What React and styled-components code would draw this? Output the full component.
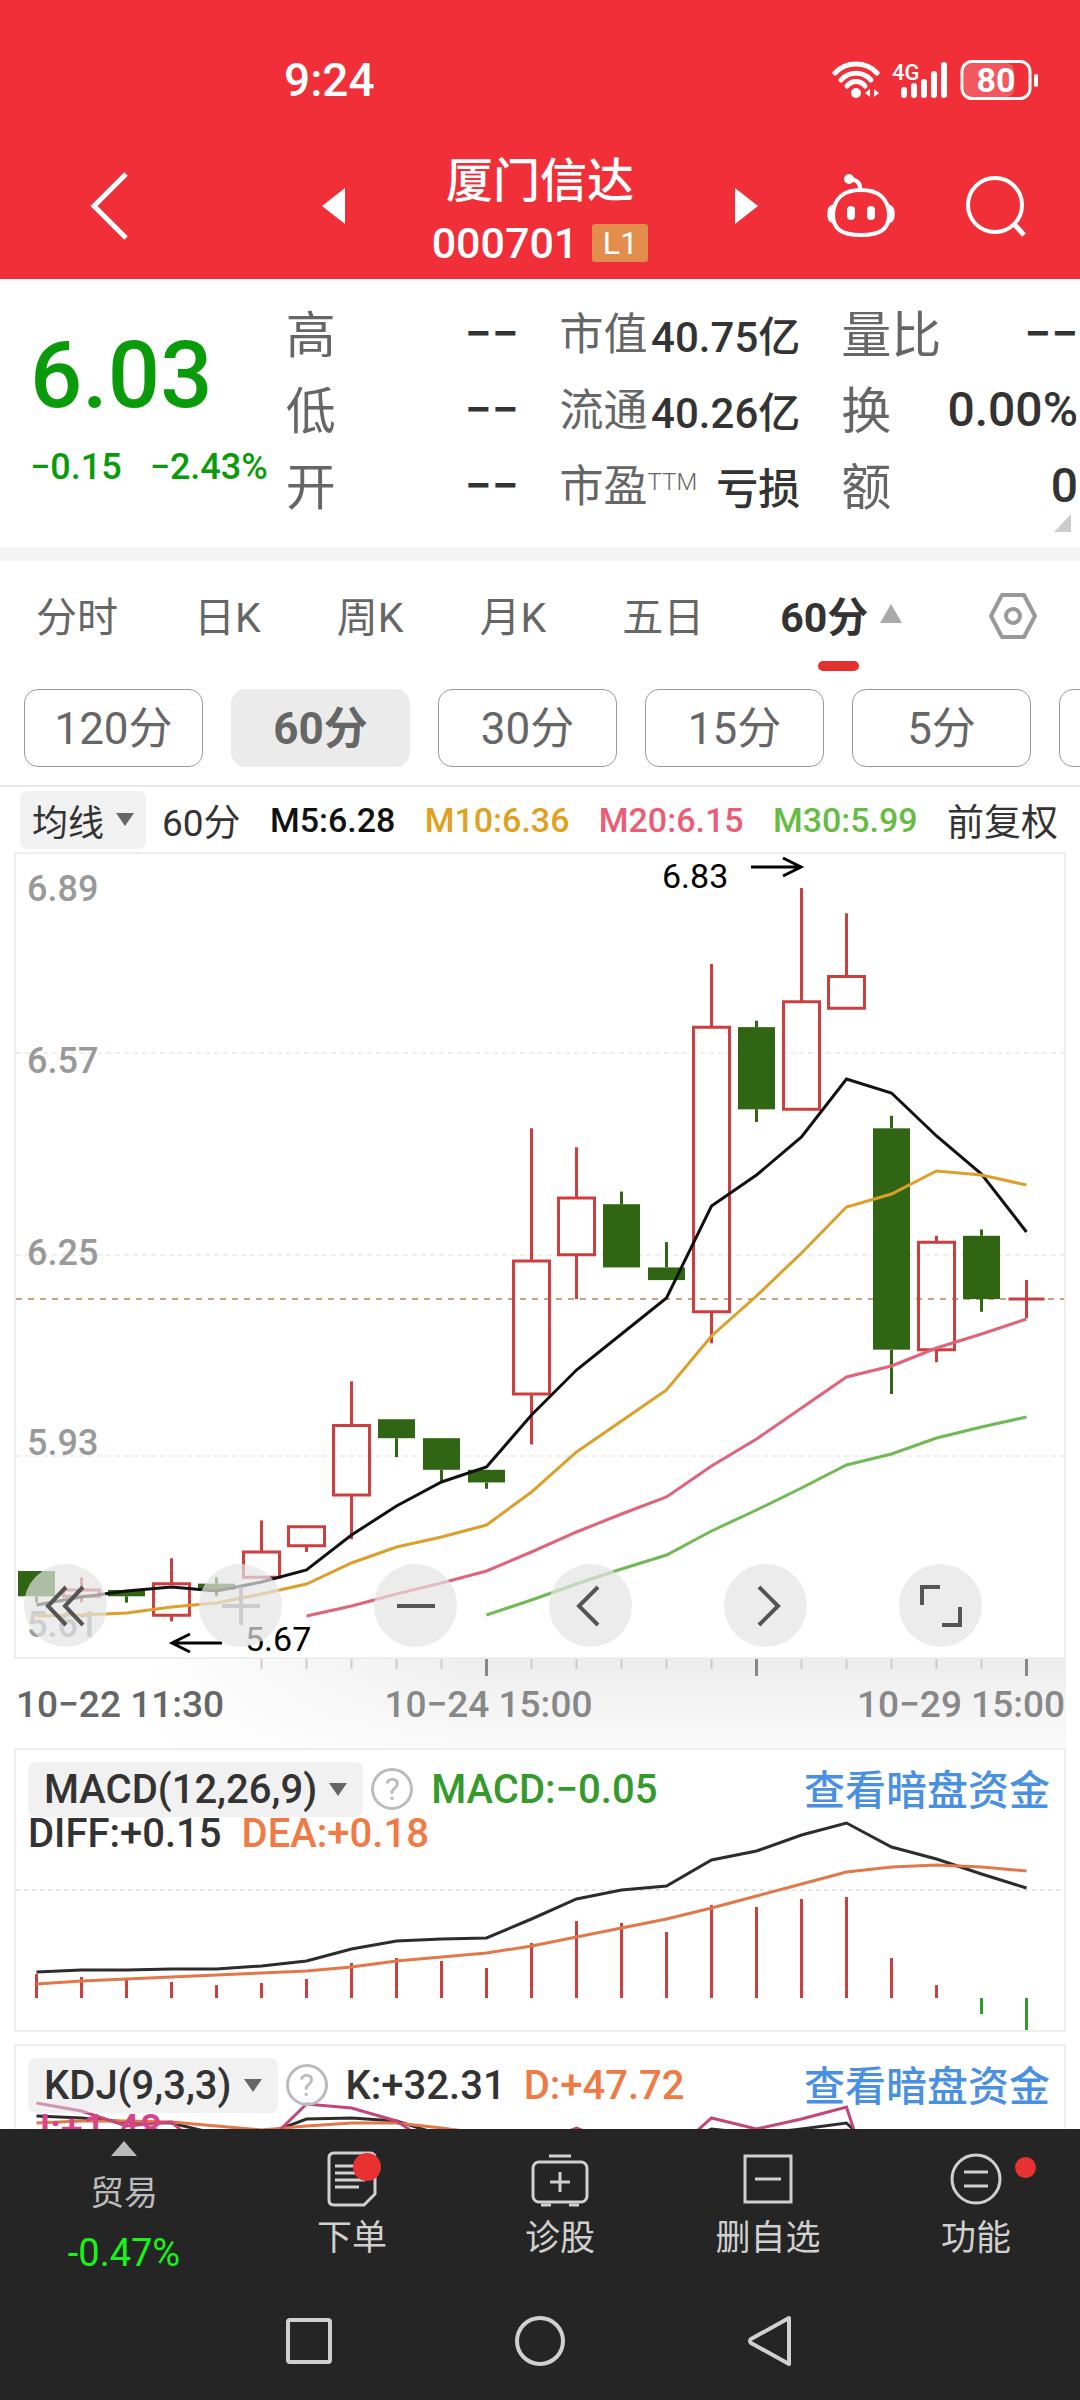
import React, { useState } from "react";
import styled, { createGlobalStyle } from "styled-components";

const GlobalStyle = createGlobalStyle`
  * {
    box-sizing: border-box;
  }

  body {
    margin: 0;
    background-color: white;
    font-family: Roboto, "Noto Sans CJK SC", sans-serif;
    color: #333;
  }

  button {
    border: none;
    padding: 0;
    background: none;
    color: inherit;
    font-family: inherit;
    cursor: pointer;
  }

  a {
    text-decoration: none;
  }

  svg {
    display: block;
  }
`;

const Screen = styled.div`
  height: 100vh;
  display: flex;
  flex-direction: column;
  overflow: hidden;
`;

/* ---------- red header ---------- */

const Header = styled.header`
  flex-shrink: 0;
  height: 279px;
  background-color: #f12f38;
  color: white;
`;

const StatusBar = styled.div`
  height: 144px;
  padding: 16px 40px 0 284px;
  display: flex;
  align-items: center;
  justify-content: space-between;

  .time {
    font-size: 46px;
    font-weight: 500;
  }

  .icons {
    display: flex;
    align-items: center;
    gap: 12px;
  }
`;

const TitleBar = styled.div`
  display: grid;
  grid-template-columns: 1fr 436px 1fr;
  grid-template-rows: 124px;
  align-items: center;

  .back {
    justify-self: start;
    margin-left: 90px;
  }

  .actions {
    display: flex;
    justify-content: flex-end;
    align-items: center;
    gap: 68px;
    padding-right: 54px;
  }
`;

const StockSwitch = styled.div`
  display: flex;
  align-items: center;
  justify-content: space-between;

  .stock {
    padding-top: 12px;
    text-align: center;
  }

  h1 {
    margin: 0;
    font-size: 47px;
    line-height: 62px;
    font-weight: 500;
  }

  .code {
    display: flex;
    align-items: center;
    justify-content: center;
    gap: 14px;
    font-size: 43px;
    line-height: 62px;
    font-weight: 500;
  }

  .level {
    width: 56px;
    height: 38px;
    background-color: #e28d4b;
    border-radius: 3px;
    font-size: 32px;
    line-height: 38px;
    font-weight: 400;
  }
`;

/* ---------- quote ---------- */

const Quote = styled.section`
  flex-shrink: 0;
  position: relative;
  display: grid;
  grid-template-columns: minmax(0, 216fr) minmax(0, 234fr) minmax(0, 242fr) minmax(0, 238fr);
  gap: 41px;
  height: 282px;
  padding: 14px 2px 0 30px;
  border-bottom: 14px solid #f4f4f4;
`;

const Price = styled.div`
  color: #099b09;
  font-weight: 500;
  white-space: nowrap;

  .last {
    margin-top: 33px;
    font-size: 92px;
    line-height: 100px;
  }

  .change {
    display: flex;
    gap: 28px;
    margin-top: 21px;
    font-size: 36px;
    line-height: 40px;
  }
`;

const Metric = styled.div`
  display: flex;
  justify-content: space-between;
  align-items: center;
  height: 76px;
  white-space: nowrap;
  font-size: ${(p) => (p.$small ? "42px" : "48px")};

  .label {
    color: #666;
    font-size: ${(p) => (p.$small ? "44px" : "50px")};
  }

  sup {
    font-size: 24px;
    font-weight: 300;
    line-height: 24px;
    vertical-align: 12px;
  }

  .value {
    padding-top: 4px;
    font-weight: 500;
  }
`;

const Corner = styled.span`
  position: absolute;
  right: 9px;
  bottom: 15px;
  border-left: 17px solid transparent;
  border-bottom: 18px solid #ccc;
`;

/* ---------- period tabs ---------- */

const Tabs = styled.nav`
  flex-shrink: 0;
  display: flex;
  align-items: center;
  gap: 76px;
  height: 118px;
  padding: 0 42px 8px 36px;

  .settings {
    margin-left: auto;
  }
`;

const Tab = styled.button`
  position: relative;
  display: flex;
  align-items: center;
  gap: 12px;
  height: 60px;
  padding-bottom: 5px;
  font-size: 41px;
  color: ${(p) => (p.$active ? "#333" : "#666")};
  font-weight: ${(p) => (p.$active ? 700 : 400)};

  &::after {
    content: "";
    display: ${(p) => (p.$active ? "block" : "none")};
    position: absolute;
    left: 38px;
    top: 75px;
    width: 41px;
    height: 10px;
    border-radius: 5px;
    background-color: #e53030;
  }
`;

const Pills = styled.div`
  flex-shrink: 0;
  display: flex;
  gap: 28px;
  padding: 10px 0 18px 24px;
  overflow: hidden;
  border-bottom: 2px solid #e8e8e8;
`;

const Pill = styled.button`
  flex: 0 0 179px;
  height: 78px;
  padding-bottom: 6px;
  border: 1px solid ${(p) => (p.$active ? "#ebebeb" : "#999")};
  border-radius: 14px;
  background-color: ${(p) => (p.$active ? "#ebebeb" : "white")};
  color: #666;
  font-size: 44px;
  font-weight: ${(p) => (p.$active ? 700 : 400)};
`;

/* ---------- charts ---------- */

const Legend = styled.div`
  flex-shrink: 0;
  display: flex;
  align-items: center;
  height: 65px;
  padding: 0 22px 0 20px;
  gap: 16px;
  white-space: nowrap;

  .values {
    flex: 1;
    display: flex;
    align-items: center;
    justify-content: space-between;
    font-size: 34px;
  }
`;

const Picker = styled.button`
  display: flex;
  align-items: center;
  gap: 12px;
  height: ${(p) => (p.$small ? "58px" : "55px")};
  padding: ${(p) => (p.$small ? "0 12px" : "0 16px")};
  border-radius: 8px;
  background-color: rgba(228, 228, 228, 0.5);
  color: #333;
  font-size: ${(p) => (p.$small ? "36px" : "40px")};
  font-weight: ${(p) => (p.$small ? 400 : 500)};
`;

const Value = styled.span`
  color: ${(p) => p.$color};
  font-size: ${(p) => (p.$plain ? "37px" : "inherit")};
  font-weight: ${(p) => (p.$plain ? 400 : 500)};
`;

const Main = styled.main`
  flex: 1;
  min-height: 0;
  overflow: hidden;
  padding: 0 14px;

  section svg.plot {
    width: 100%;
    height: auto;
  }
`;

const ChartPanel = styled.section`
  position: relative;
  border: 2px solid #eee;
`;

const Controls = styled.div`
  position: absolute;
  left: 8px;
  bottom: 10px;
  display: flex;
  gap: 92px;

  button {
    width: 83px;
    height: 83px;
    border-radius: 50%;
    background-color: rgba(228, 228, 228, 0.7);
    display: flex;
    align-items: center;
    justify-content: center;
  }
`;

const Axis = styled.div`
  height: 89px;
  background: linear-gradient(90deg, white 12%, transparent 45%),
    linear-gradient(180deg, #ededed, #fafafa);

  .dates {
    display: grid;
    grid-template-columns: 368fr 472fr auto;
    padding: 4px 1px 0 2px;
    font-size: 37px;
    line-height: 44px;
    font-weight: 500;
    color: #888;
  }

  .dates span:first-child {
    color: #666;
  }
`;

const IndicatorPanel = styled.section`
  display: grid;
  margin-bottom: 12px;
  border: 2px solid #eee;

  > * {
    grid-area: 1 / 1;
    min-width: 0;
  }
`;

const IndicatorHead = styled.div`
  position: relative;
  padding: 12px 14px 0 12px;
  font-size: 40px;
  white-space: nowrap;

  .row {
    display: flex;
    align-items: center;
    height: 54px;
    gap: 18px;
  }

  .picker {
    display: flex;
    align-items: center;
    gap: 8px;
  }

  .second {
    display: flex;
    gap: 20px;
    line-height: 36px;
  }

  a {
    margin-left: auto;
    padding-bottom: 5px;
    color: #4a90e2;
    font-size: 41px;
    font-weight: 500;
  }
`;

const HelpButton = styled.button`
  width: 42px;
  height: 42px;
  border: 3px solid #bbb;
  border-radius: 50%;
  color: #bbb;
  font-size: 32px;
  line-height: 36px;
`;

/* ---------- bottom ---------- */

const BottomNav = styled.nav`
  flex-shrink: 0;
  display: grid;
  grid-template-columns: 248fr repeat(4, 208fr);
  height: 161px;
  background-color: #252525;
  color: #d0d0d0;
`;

const NavItem = styled.button`
  display: flex;
  flex-direction: column;
  align-items: center;
  padding-top: 22px;
  font-size: 35px;
  line-height: 46px;

  .icon {
    position: relative;
    height: 65px;
  }
`;

const IndexItem = styled(NavItem)`
  padding-top: 12px;
  color: #bbb;
  font-size: 34px;

  .name {
    margin-top: 14px;
  }

  .percent {
    margin-top: 14px;
    color: #17f517;
    font-size: 38px;
  }
`;

const Dot = styled.span`
  position: absolute;
  top: ${(p) => (p.$large ? "2px" : "6px")};
  right: ${(p) => (p.$large ? "-4px" : "-34px")};
  width: ${(p) => (p.$large ? "28px" : "21px")};
  height: ${(p) => (p.$large ? "28px" : "21px")};
  border-radius: 50%;
  background-color: #e83232;
`;

const SystemBar = styled.div`
  flex-shrink: 0;
  display: flex;
  justify-content: center;
  gap: 181px;
  height: 110px;
  padding: 24px 2px 0 0;
  background-color: #252525;

  button {
    height: 52px;
  }
`;

/* ---------- data ---------- */

// open, close, high, low
const candles = [
  [5.75, 5.71, 5.75, 5.7],
  [5.71, 5.72, 5.74, 5.7],
  [5.72, 5.71, 5.72, 5.7],
  [5.68, 5.73, 5.77, 5.67],
  [5.73, 5.72, 5.74, 5.71],
  [5.74, 5.78, 5.83, 5.74],
  [5.79, 5.82, 5.82, 5.78],
  [5.87, 5.98, 6.05, 5.8],
  [5.99, 5.96, 5.99, 5.93],
  [5.96, 5.91, 5.96, 5.89],
  [5.91, 5.89, 5.91, 5.88],
  [6.03, 6.24, 6.45, 5.95],
  [6.25, 6.34, 6.42, 6.18],
  [6.33, 6.23, 6.35, 6.23],
  [6.23, 6.21, 6.27, 6.21],
  [6.16, 6.61, 6.71, 6.11],
  [6.61, 6.48, 6.62, 6.46],
  [6.48, 6.65, 6.83, 6.48],
  [6.64, 6.69, 6.79, 6.64],
  [6.45, 6.1, 6.47, 6.03],
  [6.1, 6.27, 6.28, 6.08],
  [6.28, 6.18, 6.29, 6.16],
  [6.18, 6.18, 6.21, 6.15],
];

const averages = [
  { color: "#111", start: 0, ys: [753, 745, 739, 735, 739, 730, 718, 683, 654, 630, 615, 563, 518, 482, 446, 354, 323, 285, 227, 241, 284, 322, 380] },
  { color: "#dd9f2a", start: 0, ys: [764, 763, 761, 755, 751, 742, 732, 711, 695, 685, 673, 640, 600, 569, 538, 484, 444, 401, 355, 342, 319, 323, 333] },
  { color: "#e0637a", start: 6, ys: [764, 754, 742, 731, 719, 700, 680, 662, 645, 614, 587, 556, 525, 514, 496, 482, 467] },
  { color: "#6fba55", start: 10, ys: [763, 748, 732, 717, 703, 679, 658, 636, 613, 602, 586, 575, 565] },
];

const macdBars = [24, 21, 18, 16, 13, 15, 19, 35, 40, 37, 30, 55, 77, 75, 66, 93, 91, 99, 101, 40, 13, -16, -33];
const diffLine = [224, 222, 222, 221, 221, 218, 213, 201, 193, 191, 190, 171, 151, 142, 138, 112, 103, 87, 75, 99, 111, 126, 140];
const deaLine = [236, 233, 231, 229, 227, 225, 223, 219, 213, 209, 205, 198, 189, 180, 171, 160, 148, 136, 124, 119, 117, 119, 123];

const kLine = [72, 74, 78, 79, 90, 92, 75, 74, 77, 91, 100, 100, 95, 105, 105, 85, 90, 85, 79, 122, 130];
const dLine = [79, 77, 77, 78, 82, 86, 82, 79, 79, 84, 90, 97, 97, 97, 97, 95, 93, 90, 86, 100, 110];
const jLine = [59, 67, 82, 78, 117, 104, 60, 64, 77, 107, 107, 102, 84, 102, 114, 74, 85, 75, 63, 202, 202];

const scaleLabels = [
  ["6.89", 49],
  ["6.57", 221],
  ["6.25", 413],
  ["5.93", 603],
  ["5.61", 785],
];

const metrics = [
  [["高", "--"], ["低", "--"], ["开", "--"]],
  [["市值", "40.75亿"], ["流通", "40.26亿"], ["市盈", "亏损", "TTM"]],
  [["量比", "--"], ["换", "0.00%"], ["额", "0"]],
];

const tabs = ["分时", "日K", "周K", "月K", "五日", "60分"];
const periods = ["120分", "60分", "30分", "15分", "5分", ""];

const xAt = (i) => 22.5 + i * 45;
const yAt = (price) => 36 + (6.83 - price) * 632.4;
const toPoints = (ys, start = 0) => ys.map((y, i) => `${xAt(i + start)},${y}`).join(" ");

/* ---------- drawings ---------- */

const Wifi = () => (
  <svg width="48" height="40" viewBox="0 0 48 40" fill="none" stroke="white" strokeWidth="5" strokeLinecap="round">
    <path d="M3 13 C14 1 34 1 45 13" />
    <path d="M9 20 C17 11 31 11 39 20" />
    <path d="M15 26 C20 20 28 20 33 26" />
    <circle cx="24" cy="33" r="5" fill="white" stroke="none" />
    <path d="M38 29 v8 l-5 -4 z M42 29 v8 l5 -4 z" fill="white" stroke="none" />
  </svg>
);

const Signal = () => (
  <svg width="56" height="40" viewBox="0 0 56 40">
    <text x="0" y="20" fontSize="22" fontWeight="500" fill="white">4G</text>
    <path d="M12 30 V35 M22 26 V35 M32 22 V35 M42 14 V35 M52 5 V35" stroke="white" strokeWidth="6" strokeLinecap="round" />
  </svg>
);

const Battery = () => (
  <svg width="80" height="40" viewBox="0 0 80 40">
    <rect x="4" y="3" width="50" height="34" rx="8" fill="white" opacity="0.2" />
    <rect x="2" y="1.5" width="68" height="37" rx="10" fill="none" stroke="white" strokeWidth="3" />
    <path d="M76 16 V25" stroke="white" strokeWidth="4" strokeLinecap="round" />
    <text x="36" y="32" fontSize="34" fontWeight="700" fill="white" textAnchor="middle">80</text>
  </svg>
);

const Robot = () => (
  <svg width="70" height="64" viewBox="0 0 70 64" fill="none" stroke="white" strokeWidth="4">
    <path d="M35 16 C52 16 62 24 63 40 C63 55 55 61 35 61 C15 61 7 55 7 40 C8 24 18 16 35 16 Z" />
    <path d="M34 16 C35 9 31 6 24 5" />
    <circle cx="23" cy="5" r="5" fill="white" stroke="none" />
    <path d="M6 32 C1 34 1 46 6 48 Z M64 32 C69 34 69 46 64 48 Z" fill="white" strokeWidth="2" />
    <path d="M25 36 V42 M45 36 V42" strokeWidth="8" strokeLinecap="round" />
  </svg>
);

const Caret = ({ up, width = 18, height = 13, color = "#666" }) => (
  <svg width={width} height={height} viewBox="0 0 18 13" preserveAspectRatio="none">
    <path d={up ? "M0 13 L9 0 L18 13 Z" : "M0 0 L18 0 L9 13 Z"} fill={color} />
  </svg>
);

const Candle = ({ index, data }) => {
  const [open, close, high, low] = data;
  const x = xAt(index);
  const top = yAt(Math.max(open, close));
  const bottom = yAt(Math.min(open, close));
  const rising = close >= open;
  const color = rising ? "#cd3f3f" : "#306613";
  return (
    <g stroke={color} strokeWidth="3" fill="none">
      <path d={`M${x} ${yAt(high)} V${top} M${x} ${bottom} V${yAt(low)}`} />
      {rising ? (
        <path d={`M${x - 18} ${top} H${x + 18} V${bottom} H${x - 18} Z`} />
      ) : (
        <rect x={x - 18.5} y={top} width="37" height={bottom - top} fill={color} stroke="none" />
      )}
    </g>
  );
};

const PriceChart = () => (
  <svg className="plot" viewBox="2 2 1048 803">
    <g stroke="#dedede" strokeWidth="1" strokeDasharray="5 4">
      <path d="M2 201 H1050 M2 403 H1050 M2 604 H1050" />
    </g>
    <path d="M2 447 H1050" stroke="#c4a57a" strokeWidth="2" strokeDasharray="6 6" />
    {scaleLabels.map(([text, y]) => (
      <text key={text} x="13" y={y} fontSize="36" fontWeight="500" fill="#999">{text}</text>
    ))}
    {candles.map((c, i) => (
      <Candle key={i} index={i} data={c} />
    ))}
    {averages.map((line) => (
      <polyline key={line.color} points={toPoints(line.ys, line.start)} fill="none" stroke={line.color} strokeWidth="3" />
    ))}
    <g fill="none" stroke="black" strokeWidth="3">
      <path d="M737 15 H787 M769 6 L787 15 L769 24" />
      <path d="M208 791 H158 M176 782 L158 791 L176 800" />
    </g>
    <text x="648" y="36" fontSize="34" fill="black">6.83</text>
    <text x="231" y="799" fontSize="34" fill="black">5.67</text>
  </svg>
);

const Ticks = () => (
  <svg viewBox="0 0 1052 20" width="100%">
    {candles.map((_, i) => {
      const major = i === 10 || i === 16 || i === 22;
      return i < 5 ? null : (
        <path key={i} d={`M${xAt(i)} 0 V${major ? 17 : 10}`} stroke={major ? "#888" : "#ccc"} strokeWidth={major ? 3 : 2} />
      );
    })}
  </svg>
);

const MacdChart = () => (
  <svg className="plot" viewBox="2 2 1048 280">
    <path d="M2 142 H1050" stroke="#e4e4e4" strokeWidth="2" strokeDasharray="4 4" />
    {macdBars.map((h, i) => (
      <path key={i} d={`M${xAt(i)} 250 V${250 - h}`} stroke={h > 0 ? "#cd3f3f" : "#349a2b"} strokeWidth="3" />
    ))}
    <polyline points={toPoints(diffLine)} fill="none" stroke="#2c2c2c" strokeWidth="3" />
    <polyline points={toPoints(deaLine)} fill="none" stroke="#e27849" strokeWidth="3" />
  </svg>
);

const KdjChart = () => (
  <svg className="plot" viewBox="2 2 1048 280">
    <polyline points={toPoints(kLine)} fill="none" stroke="#2c2c2c" strokeWidth="3" />
    <polyline points={toPoints(dLine)} fill="none" stroke="#e27849" strokeWidth="3" />
    <polyline points={toPoints(jLine)} fill="none" stroke="#c4447c" strokeWidth="3" />
  </svg>
);

const ControlIcon = ({ d, color = "#555" }) => (
  <svg width="44" height="44" viewBox="0 0 44 44" fill="none" stroke={color} strokeWidth="4">
    <path d={d} />
  </svg>
);

const controls = [
  { label: "最早", d: "M22 3 L4 22 L22 41 M39 3 L21 22 L39 41" },
  { label: "放大", d: "M3 22 H41 M22 3 V41", color: "#ccc" },
  { label: "缩小", d: "M3 22 H41" },
  { label: "左移", d: "M29 3 L10 22 L29 41" },
  { label: "右移", d: "M15 3 L34 22 L15 41" },
  { label: "全屏", d: "M3 21 V3 H21 M41 23 V41 H23" },
];

const Indicator = ({ name, values, extra, children }) => (
  <IndicatorPanel>
    {children}
    <IndicatorHead>
      <div className="row">
        <div className="picker">
          <Picker>
            {name}
            <Caret />
          </Picker>
          <HelpButton aria-label={`${name} 说明`}>?</HelpButton>
        </div>
        {values}
        <a href="#funds">查看暗盘资金</a>
      </div>
      <div className="second">{extra}</div>
    </IndicatorHead>
  </IndicatorPanel>
);

const App = () => {
  const [tab, setTab] = useState("60分");
  const [period, setPeriod] = useState("60分");

  return (
    <>
      <GlobalStyle />
      <Screen>
        <Header>
          <StatusBar>
            <span className="time">9:24</span>
            <div className="icons">
              <Wifi />
              <Signal />
              <Battery />
            </div>
          </StatusBar>
          <TitleBar>
            <button className="back" aria-label="返回">
              <svg width="38" height="68" viewBox="0 0 38 68" fill="none" stroke="white" strokeWidth="5">
                <path d="M36 2 L4 34 L36 66" />
              </svg>
            </button>
            <StockSwitch>
              <button aria-label="上一只">
                <svg width="23" height="36" viewBox="0 0 23 36"><path d="M23 0 V36 L0 18 Z" fill="white" /></svg>
              </button>
              <div className="stock">
                <h1>厦门信达</h1>
                <div className="code">
                  000701
                  <span className="level">L1</span>
                </div>
              </div>
              <button aria-label="下一只">
                <svg width="23" height="36" viewBox="0 0 23 36"><path d="M0 0 V36 L23 18 Z" fill="white" /></svg>
              </button>
            </StockSwitch>
            <div className="actions">
              <button aria-label="智能助手"><Robot /></button>
              <button aria-label="搜索">
                <svg width="62" height="62" viewBox="0 0 62 62" fill="none" stroke="white" strokeWidth="4">
                  <circle cx="31" cy="30" r="27" />
                  <path d="M50 49 L60 60" strokeWidth="5" />
                </svg>
              </button>
            </div>
          </TitleBar>
        </Header>

        <Quote>
          <Price>
            <div className="last">6.03</div>
            <div className="change">
              <span>−0.15</span>
              <span>−2.43%</span>
            </div>
          </Price>
          {metrics.map((column, i) => (
            <div key={i}>
              {column.map(([label, value, note]) => (
                <Metric key={label} $small={i === 1}>
                  <span className="label">
                    {label}
                    {note && <sup>{note}</sup>}
                  </span>
                  <span className="value">{value === "--" ? "−−" : value}</span>
                </Metric>
              ))}
            </div>
          ))}
          <Corner />
        </Quote>

        <Tabs>
          {tabs.map((t) => (
            <Tab key={t} $active={t === tab} onClick={() => setTab(t)}>
              {t}
              {t === "60分" && <Caret up width={22} height={19} color="#aaa" />}
            </Tab>
          ))}
          <button className="settings" aria-label="设置">
            <svg width="50" height="48" viewBox="0 0 50 48" fill="none" stroke="#999" strokeWidth="4" strokeLinejoin="round">
              <path d="M14 3 H36 L47 24 L36 45 H14 L3 24 Z" />
              <circle cx="25" cy="24" r="7" />
            </svg>
          </button>
        </Tabs>

        <Pills>
          {periods.map((p) => (
            <Pill key={p} $active={p === period} aria-label={p || "更多周期"} onClick={() => setPeriod(p)}>
              {p}
            </Pill>
          ))}
        </Pills>

        <Legend>
          <Picker $small>
            均线
            <Caret />
          </Picker>
          <div className="values">
            <Value $color="#333" $plain>60分</Value>
            <Value $color="#111">M5:6.28</Value>
            <Value $color="#e0a020">M10:6.36</Value>
            <Value $color="#ea5d74">M20:6.15</Value>
            <Value $color="#66bb44">M30:5.99</Value>
            <Value $color="#333" $plain>前复权</Value>
          </div>
        </Legend>

        <Main>
          <ChartPanel>
            <PriceChart />
            <Controls>
              {controls.map((c) => (
                <button key={c.label} aria-label={c.label}>
                  <ControlIcon d={c.d} color={c.color} />
                </button>
              ))}
            </Controls>
          </ChartPanel>
          <Axis>
            <Ticks />
            <div className="dates">
              <span>10−22 11:30</span>
              <span>10−24 15:00</span>
              <span>10−29 15:00</span>
            </div>
          </Axis>

          <Indicator
            name="MACD(12,26,9)"
            values={<Value $color="#349a2b">MACD:−0.05</Value>}
            extra={
              <>
                <Value $color="#333">DIFF:+0.15</Value>
                <Value $color="#f07a45">DEA:+0.18</Value>
              </>
            }
          >
            <MacdChart />
          </Indicator>

          <Indicator
            name="KDJ(9,3,3)"
            values={
              <>
                <Value $color="#333">K:+32.31</Value>
                <Value $color="#f07a45">D:+47.72</Value>
              </>
            }
            extra={<Value $color="#d8438a">J:+1.48</Value>}
          >
            <KdjChart />
          </Indicator>
        </Main>

        <BottomNav>
          <IndexItem>
            <Caret up width={26} height={15} color="#bbb" />
            <span className="name">贸易</span>
            <span className="percent">-0.47%</span>
          </IndexItem>
          <NavItem>
            <span className="icon">
              <svg width="50" height="58" viewBox="0 0 50 58" fill="none" stroke="#d0d0d0" strokeWidth="3">
                <path d="M7 2 H43 Q48 2 48 7 V43 L37 54 H7 Q2 54 2 49 V7 Q2 2 7 2 Z" />
                <path d="M8 15 H32 M8 22 H32 M8 29 H38 M8 36 H32" />
              </svg>
              <Dot $large />
            </span>
            下单
          </NavItem>
          <NavItem>
            <span className="icon">
              <svg width="58" height="58" viewBox="0 0 58 58" fill="none" stroke="#d0d0d0" strokeWidth="3">
                <path d="M18 5 H40" />
                <rect x="2" y="11" width="54" height="40" rx="6" />
                <path d="M10 54 H20 M38 54 H48" />
                <path d="M19 31 H39 M29 21 V41" />
              </svg>
            </span>
            诊股
          </NavItem>
          <NavItem>
            <span className="icon">
              <svg width="50" height="58" viewBox="0 0 50 58" fill="none" stroke="#d0d0d0" strokeWidth="3">
                <rect x="2" y="5" width="46" height="46" />
                <path d="M12 28 H38" />
              </svg>
            </span>
            删自选
          </NavItem>
          <NavItem>
            <span className="icon">
              <svg width="52" height="58" viewBox="0 0 52 58" fill="none" stroke="#d0d0d0" strokeWidth="3">
                <circle cx="26" cy="28" r="24" />
                <path d="M14 21 H38 M14 35 H38" />
              </svg>
              <Dot />
            </span>
            功能
          </NavItem>
        </BottomNav>

        <SystemBar>
          <button aria-label="最近任务">
            <svg width="48" height="52" viewBox="0 0 48 52" fill="none" stroke="#d0d0d0" strokeWidth="4">
              <rect x="3" y="6" width="42" height="42" rx="2" />
            </svg>
          </button>
          <button aria-label="主屏幕">
            <svg width="52" height="52" viewBox="0 0 52 52" fill="none" stroke="#d0d0d0" strokeWidth="4">
              <circle cx="26" cy="27" r="23" />
            </svg>
          </button>
          <button aria-label="后退">
            <svg width="46" height="52" viewBox="0 0 46 52" fill="none" stroke="#d0d0d0" strokeWidth="4" strokeLinejoin="round">
              <path d="M42 4 V50 L4 29 Q2 27 4 25 Z" />
            </svg>
          </button>
        </SystemBar>
      </Screen>
    </>
  );
};

export default App;
